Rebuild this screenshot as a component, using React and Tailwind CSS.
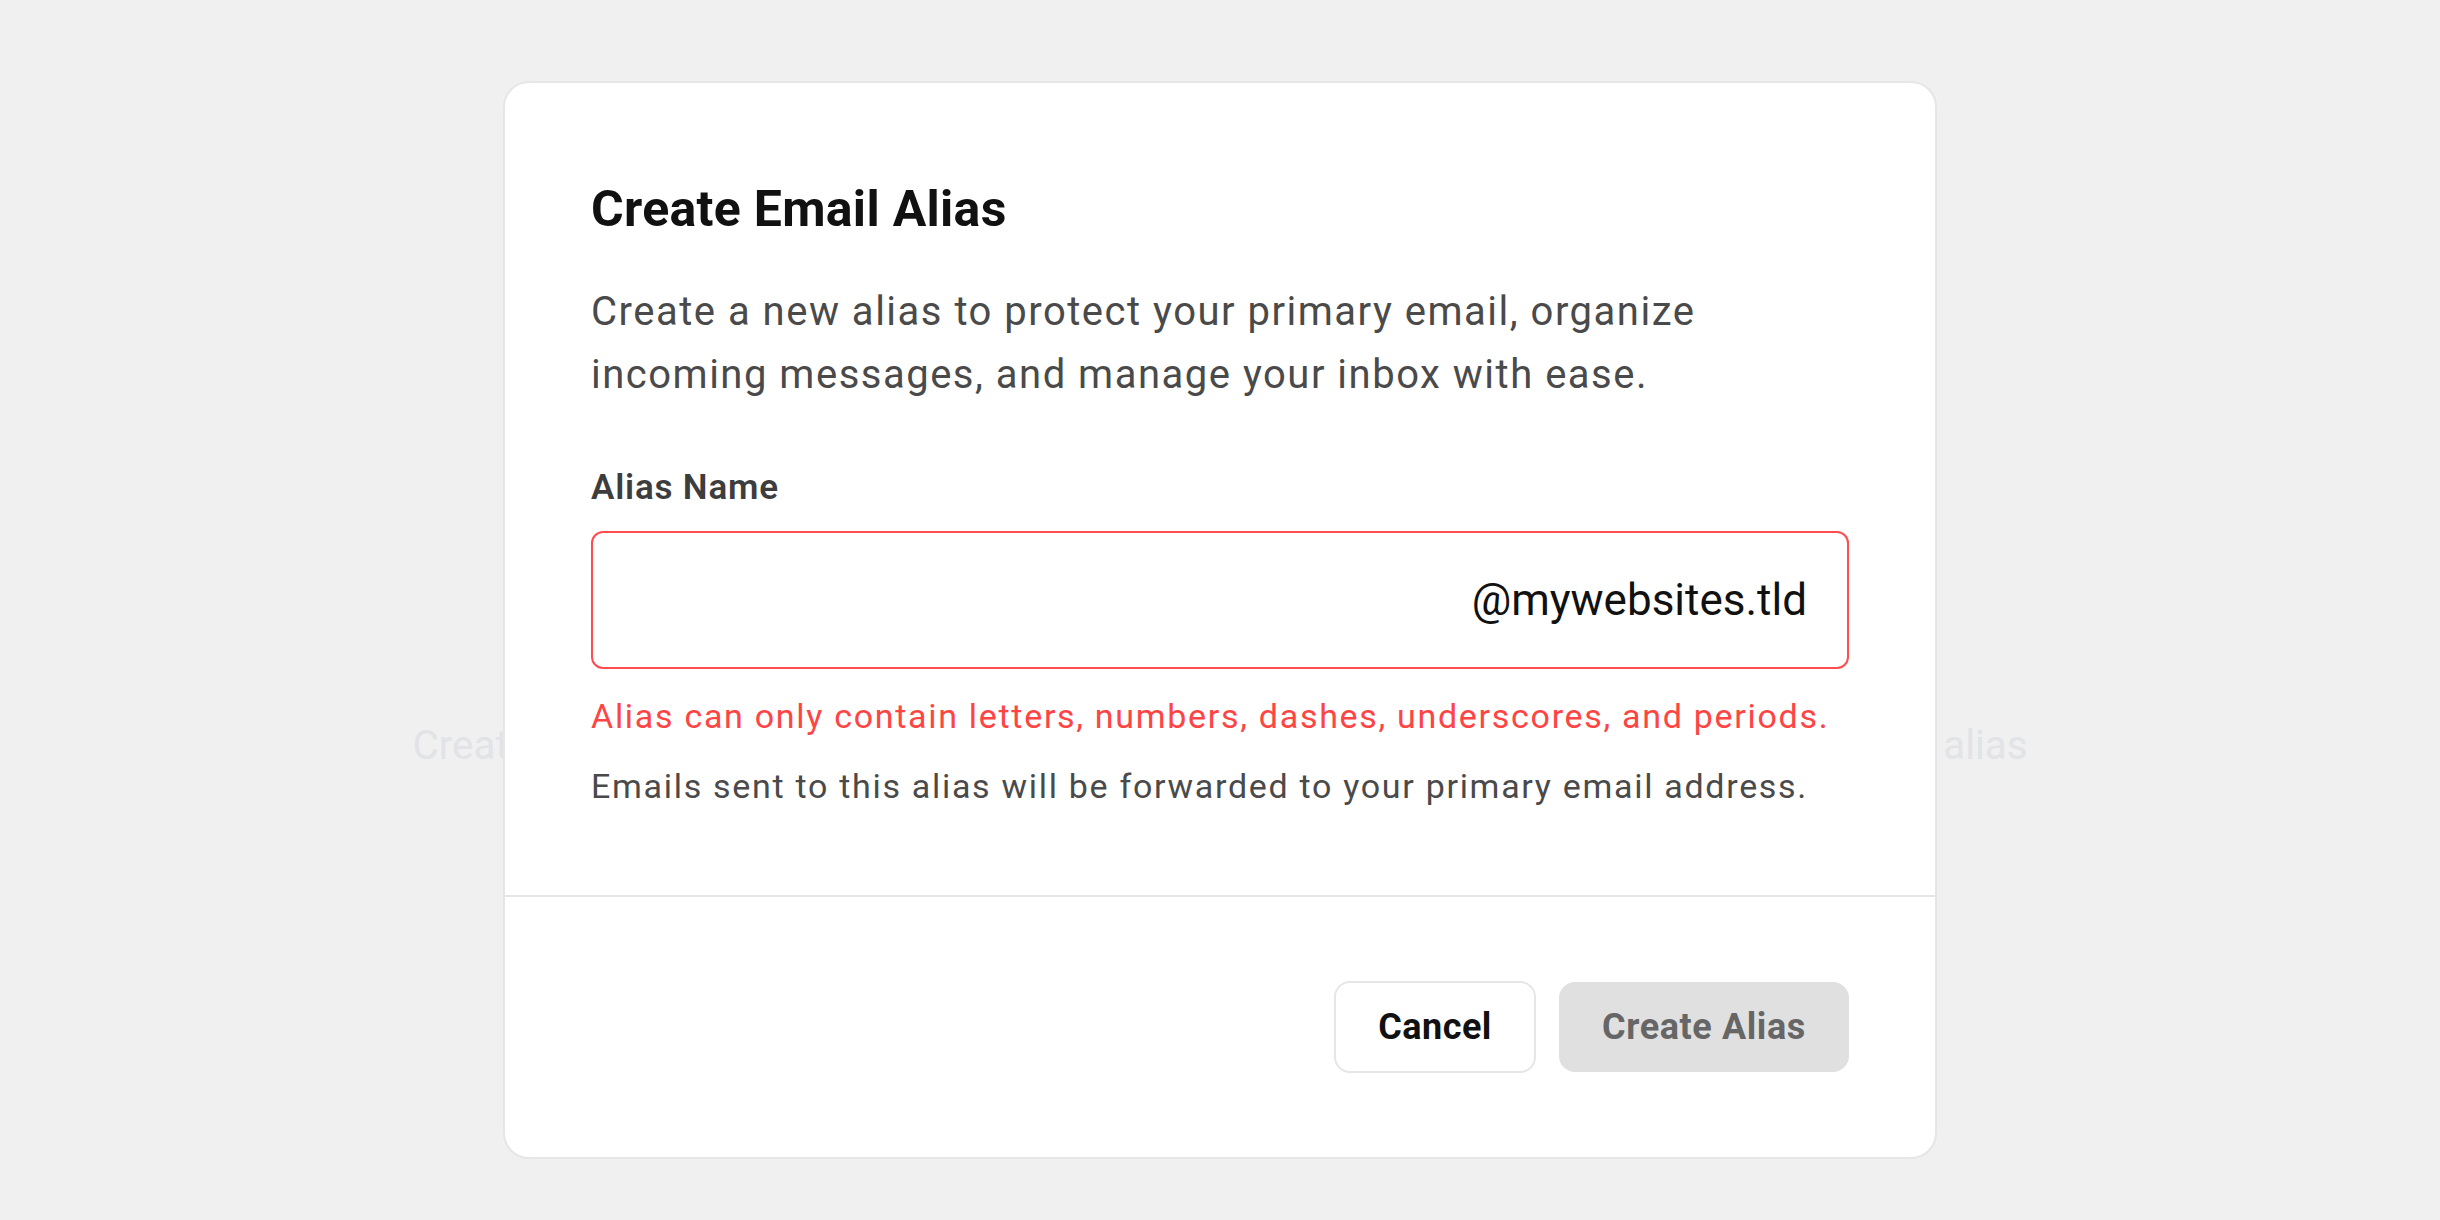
import React from "react";

export default function App() {
  return (
    <div
      className="relative w-full h-[1220px] bg-[#f0f0f0] overflow-hidden"
      style={{ fontFamily: "Roboto, 'Noto Sans', Arial, sans-serif" }}
    >
      {/* page content under the overlay */}
      <div className="pt-[716px] flex justify-center">
        <p className="text-[40.4px] leading-[60px] text-[#e1e3e7] whitespace-nowrap">
          Create your first alias to keep your primary email private. Click the button to create an alias
        </p>
      </div>

      {/* dialog overlay */}
      <div className="absolute inset-0 flex justify-center pt-[81px]">
        <div className="w-[1434px] h-[1078px] bg-white border-2 border-[#e6e6e6] rounded-[26px] flex flex-col">
          <div className="px-[86px] pt-[96px] pb-[89px] flex flex-col">
            <h2 className="text-[50px] leading-[60px] font-bold text-[#111111] tracking-[0.3px]">Create Email Alias</h2>
            <p className="mt-[41px] text-[40px] leading-[63px] text-[#4a4a4a] tracking-[1.5px]">
              Create a new alias to protect your primary email, organize incoming messages, and manage your inbox with ease.
            </p>
            <label className="mt-[62px] text-[35px] leading-[40px] font-semibold text-[#3d3d3d] tracking-[0.8px]">Alias Name</label>
            <div className="mt-[23px] h-[138px] border-2 border-[#ff4d4f] rounded-[12px] flex items-center justify-end pr-[40px]">
              <span className="text-[44px] text-[#111111]">@mywebsites.tld</span>
            </div>
            <p className="mt-[27px] text-[34px] leading-[40px] text-[#ff4444] tracking-[1.7px]">
              Alias can only contain letters, numbers, dashes, underscores, and periods.
            </p>
            <p className="mt-[30px] text-[34px] leading-[40px] text-[#4a4a4a] tracking-[1.7px]">
              Emails sent to this alias will be forwarded to your primary email address.
            </p>
          </div>
          <div className="border-t-2 border-[#e6e6e6] px-[86px] pt-[84px] flex justify-end items-center gap-[23px]">
            <button className="w-[202px] h-[92px] border-2 border-[#e6e6e6] rounded-[16px] bg-white text-[36px] font-bold text-[#111111] tracking-[0.5px]">
              Cancel
            </button>
            <button className="w-[290px] h-[90px] rounded-[16px] bg-[#e0e0e0] text-[36px] font-bold text-[#666666] tracking-[0.6px]">
              Create Alias
            </button>
          </div>
        </div>
      </div>
    </div>
  );
}
